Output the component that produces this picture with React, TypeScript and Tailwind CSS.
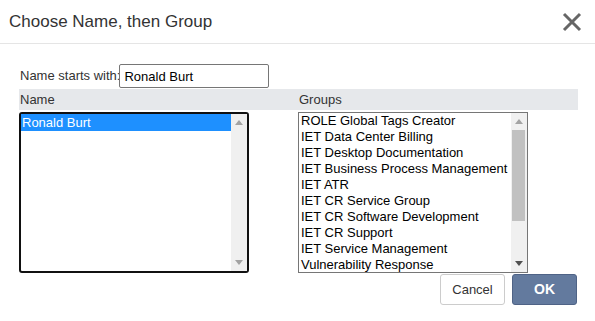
import React from 'react';

const groups = [
  'ROLE Global Tags Creator',
  'IET Data Center Billing',
  'IET Desktop Documentation',
  'IET Business Process Management',
  'IET ATR',
  'IET CR Service Group',
  'IET CR Software Development',
  'IET CR Support',
  'IET Service Management',
  'Vulnerability Response',
];

function Arrow({ up, color }: { up?: boolean; color: string }) {
  return (
    <svg width="8" height="5" viewBox="0 0 8 5" className="block">
      <polygon points={up ? '0,5 8,5 4,0' : '0,0 8,0 4,5'} fill={color} />
    </svg>
  );
}

// fake classic scrollbar so the render doesn't depend on the browser's own
function Scrollbar({ thumb, downColor }: { thumb?: boolean; downColor: string }) {
  return (
    <div className="flex w-[16px] flex-col items-center bg-[#f0f0f0]">
      <div className="flex h-[17px] w-full items-center justify-center">
        <Arrow up color="#a3a3a3" />
      </div>
      <div className="flex-1 w-full pr-[2px]">
        {thumb && <div className="ml-[1px] h-[91px] bg-[#c1c1c1]" />}
      </div>
      <div className="flex h-[17px] w-full items-center justify-center">
        <Arrow color={downColor} />
      </div>
    </div>
  );
}

export default function App() {
  return (
    <div className="h-[321px] w-[595px] bg-white font-['Liberation_Sans',Arial,sans-serif] text-[13px] text-[#333]">
      {/* Header */}
      <div className="flex h-[44px] items-center justify-between border-b border-[#e5e5e5] pl-[9px] pr-[13px]">
        <h1 className="text-[17px] text-[#333]">Choose Name, then Group</h1>
        <button className="mt-[1px]">
          <svg width="20" height="20" viewBox="0 0 20 20" className="block">
            <path d="M2 2 L18 18 M18 2 L2 18" stroke="#666" strokeWidth="3" />
          </svg>
        </button>
      </div>

      {/* Body */}
      <div className="pl-[19px] pr-[17px] pt-[20px]">
        <div className="flex h-[24px] items-center">
          <label className="pl-[1px] text-[#333]">Name starts with:</label>
          <input
            defaultValue="Ronald Burt"
            className="-ml-[1px] h-[24px] w-[150px] rounded-[2px] border border-[#767676] px-[4px] text-[13px] text-black outline-none"
          />
        </div>

        <div className="mt-[1px] grid h-[21px] w-[559px] grid-cols-[279px_280px] items-center bg-[#e6e8eb]">
          <div className="pl-[1px]">Name</div>
          <div className="pl-[1px]">Groups</div>
        </div>

        <div className="mt-[2px] grid w-[559px] grid-cols-[279px_280px]">
          {/* Name list */}
          <div className="flex h-[161px] w-[230px] rounded-[3px] border-2 border-[#111]">
            <div className="flex-1">
              <div className="h-[17px] bg-[#1e90ff] pl-[1px] leading-[17px] text-white">Ronald Burt</div>
            </div>
            <Scrollbar downColor="#a3a3a3" />
          </div>

          {/* Groups list */}
          <div className="flex h-[161px] w-[230px] border border-[#767676]">
            <div className="flex-1 overflow-hidden pl-[2px]">
              {groups.map(g => (
                <div key={g} className="h-[16px] whitespace-nowrap leading-[16px] text-black">{g}</div>
              ))}
            </div>
            <Scrollbar thumb downColor="#505050" />
          </div>
        </div>

        <div className="mt-[1px] flex justify-end gap-[7px] pr-[1px]">
          <button className="h-[31px] w-[65px] rounded-[3px] border border-[#ccc] bg-white text-[13px] text-[#333]">
            Cancel
          </button>
          <button className="h-[31px] w-[65px] rounded-[3px] border border-[#4f6386] bg-[#637a9e] text-[14px] font-bold text-white">
            OK
          </button>
        </div>
      </div>
    </div>
  );
}
